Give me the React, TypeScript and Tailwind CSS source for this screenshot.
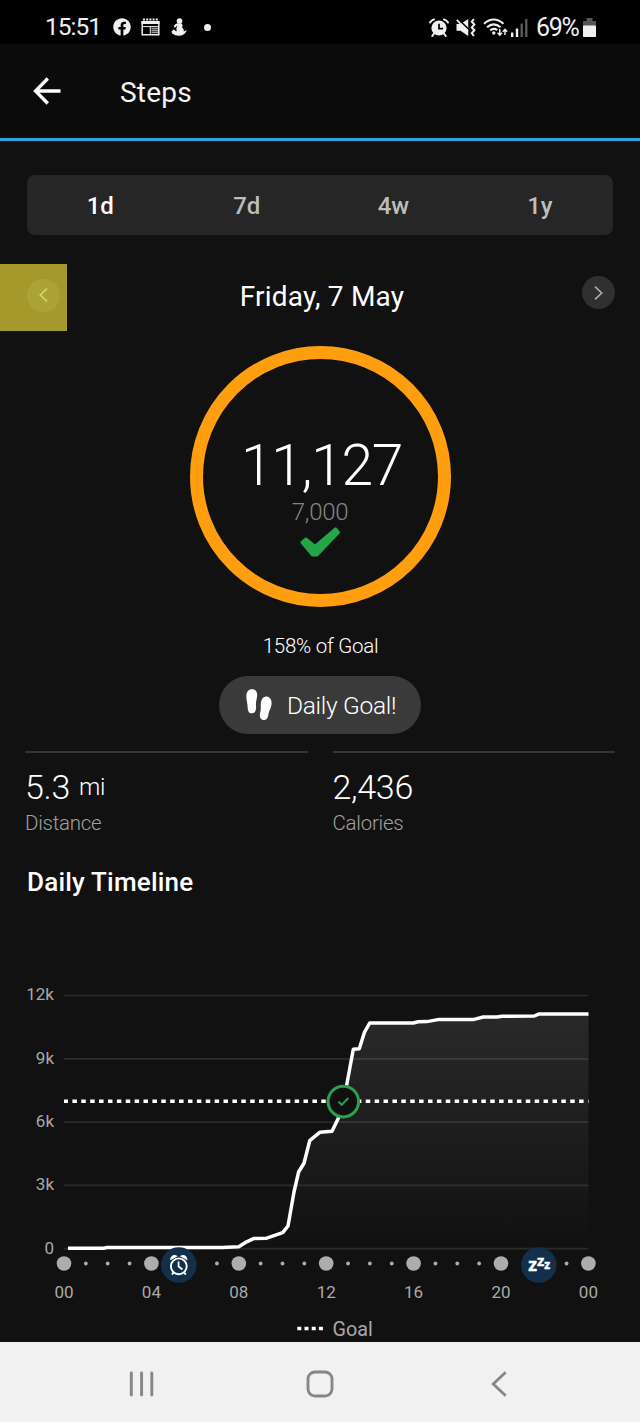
import React, { useState } from 'react';
import { FaFacebook } from 'react-icons/fa';

const RANGES = ['1d', '7d', '4w', '1y'];

// Cumulative steps over the day, in chart coordinates
const LINE =
  'M68 1248.2 L104 1248.2 L107 1247.4 L222 1247.4 L238.7 1246.8 L246.7 1241.8 L254 1238.4 L266.7 1238.2 L282.7 1232.7 L288 1226 L294 1192 L298.7 1171.7 L304 1163.3 L309.7 1140.7 L320 1132.2 L332 1131.3 L338.3 1118.3 L346.7 1085 L353.3 1049.3 L359.3 1048.7 L364.3 1032.7 L369.7 1023 L413.3 1023 L418 1021.8 L427 1021.6 L439.3 1019.4 L474 1019.4 L483.3 1017 L497 1017 L502 1016.2 L534.3 1016 L538.6 1014.1 L588.5 1014.1';

const GRID = [
  { label: '12k', y: 995.5 },
  { label: '9k', y: 1058.8 },
  { label: '6k', y: 1122.2 },
  { label: '3k', y: 1185.4 },
  { label: '0', y: 1248.6 },
];

const HOURS = ['00', '04', '08', '12', '16', '20', '00'];
const HOUR_WIDTH = 524.4 / 24;
// No dots under the wake up and bed time badges
const HIDDEN_DOTS = [5, 6, 21, 22];

const StatusBar = () => (
  <div className="flex h-[44px] items-center bg-black pt-[10px] text-[#f0f0f0]">
    <span className="ml-[45px] w-[58px] text-[24.5px] leading-none tracking-[-1px]">15:51</span>
    <FaFacebook className="ml-[10px] h-[18px] w-[18px]" />
    <svg className="ml-[10px] h-[18px] w-[19px]" viewBox="0 0 19 18" fill="none" stroke="currentColor">
      <path d="M1.2 3.5V16.8H17.8V3.5" strokeWidth="1.5" />
      <path d="M.5 4.5H18.5" strokeWidth="3" />
      <path d="M2 1.5H18" strokeWidth="2" strokeDasharray="2 1.2" />
      <path d="M2 8.6H17M9.3 8.6V16" strokeWidth="1" />
      <path d="M10.5 10.5H17M10.5 12.5H17M10.5 14.5H17" strokeWidth="1.3" opacity=".65" />
    </svg>
    <svg className="ml-[11px] h-[18px] w-[16px]" viewBox="0 0 16 18" fill="currentColor">
      <circle cx="8.5" cy="3" r="2.8" />
      <path d="M7 5.2C3.5 6 2.2 8 3.5 9.6L5 9C5.2 8.3 6 7.7 6.4 7.8C5.4 9.5 5 11.5 5.8 13.2C4 13 3.2 12.6 2.8 11.3L.3 13.8C2.5 17.5 6 18 8.6 17.8C12.4 17.5 15 15.4 15.7 12L12.8 13.5C12.9 12.3 12.8 10.7 11 9.5C12.1 8 11.6 6 10 5.2Z" />
      <path d="M1.2 15.2L4 12.6" stroke="currentColor" strokeWidth="1.3" />
    </svg>
    <span className="ml-[17px] h-[7px] w-[7px] rounded-full bg-current" />

    <svg className="ml-auto h-[19px] w-[20px]" viewBox="0 0 20 19">
      <circle cx="10" cy="10" r="7.6" fill="currentColor" />
      <path d="M1 4.5Q2.5 1.8 5 1.4M19 4.5Q17.5 1.8 15 1.4M5 15.5L3.3 18M15 15.5L16.7 18" stroke="currentColor" strokeWidth="2" strokeLinecap="round" fill="none" />
      <path d="M10 5.8V10.6H14" stroke="#000" strokeWidth="1.7" fill="none" />
    </svg>
    <svg className="ml-[7px] h-[19px] w-[20px]" viewBox="0 0 20 19" fill="none">
      <path d="M.5 6H4.5L12.2 1V18L4.5 12.8H.5Z" fill="currentColor" />
      <path d="M1.5 .5L13.5 12" stroke="#000" strokeWidth="1.6" />
      <path d="M.8 1.8L12 13.5" stroke="currentColor" strokeWidth="1.8" />
      <path d="M17.8 1L15.8 3.7L18.4 6.5L15.8 9.4L18.4 12.3L15.8 15.1L17.8 18" stroke="currentColor" strokeWidth="2" />
    </svg>
    <svg className="ml-[7px] h-[19px] w-[25px]" viewBox="0 0 25 19" fill="none" stroke="currentColor">
      <path d="M1 5.7Q10.5-2.7 20.5 5.7M4 9.2Q10.7 3.5 17.5 9.2M7.2 12.4Q10.8 9.6 14.4 12" strokeWidth="2" />
      <circle cx="10.8" cy="15" r="1.7" fill="currentColor" stroke="none" />
      <path d="M16.8 11V16.5M14.6 14.8L16.8 17.2L19 14.8M22 17V12M19.8 13.8L22 11.4L24.2 13.8" strokeWidth="1.5" />
    </svg>
    <svg className="ml-[3px] h-[19px] w-[17px]" viewBox="0 0 17 19" fill="currentColor">
      <rect x="0" y="14.5" width="2.4" height="4.5" />
      <rect x="4.8" y="10.5" width="2.4" height="8.5" />
      <rect x="9.6" y="5.5" width="2.2" height="13.5" opacity=".4" />
      <rect x="14.2" y="1" width="2.2" height="18" opacity=".4" />
    </svg>
    <span className="ml-[8px] w-[45px] text-[25px] leading-none tracking-[-1.3px]">69%</span>
    <svg className="mr-[44px] ml-[2px] h-[19px] w-[13px]" viewBox="0 0 13 19">
      <path d="M3.5 0H9.5V3H13V8H0V3H3.5Z" fill="#555" />
      <rect y="7.5" width="13" height="11.5" rx=".8" fill="currentColor" />
    </svg>
  </div>
);

const AppBar = () => (
  <header className="flex h-[97px] items-center border-b-[3px] border-[#2ba3da] bg-[#0b0b0b] pl-[33px]">
    <svg className="h-[28px] w-[28px]" viewBox="0 0 28 28" fill="none" stroke="#fff" strokeWidth="3.3">
      <path d="M27.5 14H2.5M14.8 1.5L2.5 14L14.8 26.5" />
    </svg>
    <h1 className="ml-[59px] pt-[4px] text-[28px] leading-none tracking-[0.2px] text-[#f4f4f4]">Steps</h1>
  </header>
);

const RangeTabs = () => {
  const [range, setRange] = useState('1d');
  return (
    <div className="mx-[27px] mt-[34px] flex h-[60px] rounded-lg bg-[#262626]">
      {RANGES.map(r => (
        <button
          key={r}
          onClick={() => setRange(r)}
          className={`flex-1 pt-[2px] text-[24px] leading-none font-medium tracking-[-0.2px] ${r === range ? 'text-white' : 'text-[#bdbdbd]'}`}
        >
          {r}
        </button>
      ))}
    </div>
  );
};

const DateNav = () => (
  <div className="mt-[29px] flex h-[67px] items-center justify-between">
    <button className="flex h-[67px] w-[67px] items-center justify-end bg-[#a5992c] pr-[7px] pb-[5px]">
      <span className="flex h-[33px] w-[33px] items-center justify-center rounded-full bg-[#aca337]">
        <svg className="h-[14px] w-[9px]" viewBox="0 0 9 14" fill="none" stroke="#d8d16a" strokeWidth="1.7">
          <path d="M8 .6L1.3 7L8 13.4" />
        </svg>
      </span>
    </button>
    <h2 className="pb-[2px] pl-[4px] text-[28px] leading-none tracking-[0.2px] text-white">Friday, 7 May</h2>
    <div className="flex h-full w-[67px] pt-[12px] pl-[9px]">
      <button className="flex h-[33px] w-[33px] items-center justify-center rounded-full bg-[#303030]">
        <svg className="h-[14px] w-[9px]" viewBox="0 0 9 14" fill="none" stroke="#aaa" strokeWidth="1.7">
          <path d="M1 .6L7.7 7L1 13.4" />
        </svg>
      </button>
    </div>
  </div>
);

const GoalRing = () => (
  <div className="mx-auto mt-[15px] flex h-[261px] w-[261px] flex-col items-center rounded-full border-[13px] border-[#ff9f10] pt-[78px]">
    <div className="pl-[3px] text-[57px] leading-[57px] font-light tracking-[-1.3px] text-white">11,127</div>
    <div className="mt-[6px] text-[24px] leading-[24px] font-light tracking-[-0.3px] text-[#858585]">7,000</div>
    <svg className="mt-[3px] h-[30px] w-[40px]" viewBox="0 0 40 30">
      <path d="M2 15.5L6 12L15 19.5L35.5 1.8L38.4 5.5L17 28L12.5 28Z" fill="#24a547" stroke="#24a547" strokeWidth="3" strokeLinejoin="round" />
    </svg>
  </div>
);

const FootprintsIcon = () => (
  <svg className="h-[32px] w-[26px]" viewBox="0 0 26 32" fill="#fff">
    <path d="M5.2 .3C8.8 -.2 11.4 2.3 11.2 6.2C11.1 9.5 9.7 12 10 15.5C10.2 18.6 10.5 23.5 6.5 24.3C3 24.8 1.8 22 1.7 19C1.7 15.500 .6 12.5 .4 8.5C.1 4.2 1.6 .8 5.2 .3Z" />
    <path d="M20.700 7.5C24.5 8.1 26 11.5 25.5 15.5C25 19.5 23 21.5 22.5 25C22.1 28.6 20.8 31.5 17.5 31C13.8 30.5 13.2 26.5 14.3 23C15.4 19.5 14.2 17 15 13C15.8 9.2 17.7 7.1 20.7 7.5Z" />
  </svg>
);

const Stat = ({ value, unit, label }: { value: string; unit?: string; label: string }) => (
  <div className="flex-1 border-t-2 border-[#363636] pt-[17px]">
    <div className="flex h-[34px] text-[34px] leading-[34px] font-light tracking-[-0.3px] text-white">
      {value}
      {unit && <span className="ml-[9px] text-[24px] leading-[35px]">{unit}</span>}
    </div>
    <div className="mt-[8px] text-[20.5px] leading-[22px] font-light tracking-[-0.25px] text-[#a0a0a0]">{label}</div>
  </div>
);

const TimelineChart = () => (
  <svg className="block h-[362px] w-[640px]" viewBox="0 980 640 362">
    <defs>
      <linearGradient id="area" x1="0" y1="0" x2="0" y2="1">
        <stop offset="0" stopColor="#292929" />
        <stop offset="1" stopColor="#111111" />
      </linearGradient>
    </defs>
    <path d={`${LINE} V1248.5 H68 Z`} fill="url(#area)" />
    {GRID.map(g => (
      <g key={g.label}>
        <line x1="64" x2="588.5" y1={g.y} y2={g.y} stroke="#fff" strokeOpacity=".11" strokeWidth="1.7" />
        <text x="54" y={g.y + 4.9} textAnchor="end" fontSize="17" fill="#a9a9a9">{g.label}</text>
      </g>
    ))}
    <path d={LINE} fill="none" stroke="#fff" strokeWidth="3.5" strokeLinejoin="round" />
    <line x1="64" x2="588.5" y1="1101.3" y2="1101.3" stroke="#fff" strokeWidth="3.6" strokeDasharray="4.5 4.39" strokeDashoffset=".5" />

    {/* goal reached */}
    <circle cx="343.3" cy="1101.6" r="15.3" fill="#101010" stroke="#2b9f50" strokeWidth="3" />
    <path d="M338.5 1101.7L341.8 1104.8L348.3 1098" fill="none" stroke="#2b9f50" strokeWidth="2" />

    {Array.from({ length: 25 }, (_, i) => i).filter(i => !HIDDEN_DOTS.includes(i)).map(i => (
      <circle key={i} cx={64 + i * HOUR_WIDTH} cy="1263.5" r={i % 4 === 0 ? 7.3 : 1.9} fill="#adadad" />
    ))}
    {HOURS.map((h, i) => (
      <text key={i} x={64 + i * 4 * HOUR_WIDTH} y="1297.6" textAnchor="middle" fontSize="17" fill="#a9a9a9">{h}</text>
    ))}

    {/* wake up */}
    <circle cx="178.8" cy="1265" r="17.8" fill="#12304b" />
    <g fill="none" stroke="#fff" strokeWidth="1.9">
      <circle cx="178.8" cy="1266.3" r="7.9" />
      <path d="M178.6 1261.5V1266.5L182.5 1269.5" strokeWidth="1.7" />
      <path d="M173.5 1272.7L171.8 1274.5M184.1 1272.7L185.8 1274.5" />
    </g>
    <path d="M170.3 1260.3C169.5 1256.6 174 1253 177.7 1256.3ZM187.3 1260.3C188.1 1256.6 183.6 1253 179.9 1256.3Z" fill="#fff" />

    {/* bed time */}
    <circle cx="538.8" cy="1265" r="17.8" fill="#12304b" />
    <g fill="#fff" stroke="#fff" strokeWidth=".4" fontWeight="700" fontFamily="'Open Sans', sans-serif">
      <text x="528.2" y="1270.6" fontSize="18">z</text>
      <text x="537" y="1265.8" fontSize="15">z</text>
      <text x="544.2" y="1268.6" fontSize="12">z</text>
    </g>

    <line x1="297.3" x2="323" y1="1328.5" y2="1328.5" stroke="#fff" strokeWidth="3.6" strokeDasharray="4 3.2" />
    <text x="332.5" y="1336" fontSize="19.8" fill="#a9a9a9">Goal</text>
  </svg>
);

const NavBar = () => (
  <nav className="flex h-[80px] items-center bg-[#f1f1f1] pt-[3px]">
    <svg className="ml-[129px] h-[26px] w-[26px]" viewBox="0 0 26 26" stroke="#868686" strokeWidth="2.9" strokeLinecap="round">
      <path d="M2.3 2V24M12.6 2V24M22.8 2V24" />
    </svg>
    <svg className="ml-[151px] h-[28px] w-[28px]" viewBox="0 0 28 28" fill="none" stroke="#868686" strokeWidth="2.8">
      <rect x="2" y="2" width="24" height="24" rx="7" />
    </svg>
    <svg className="ml-[157px] h-[26px] w-[16px]" viewBox="0 0 16 26" fill="none" stroke="#868686" strokeWidth="2.8">
      <path d="M14.7 1.3L2.2 13L14.7 24.7" />
    </svg>
  </nav>
);

const App = () => (
  <div className="flex h-[1422px] w-[640px] flex-col overflow-hidden bg-[#111111] font-['Roboto',sans-serif]">
    <StatusBar />
    <AppBar />
    <main className="flex h-[1201px] flex-col">
      <RangeTabs />
      <DateNav />
      <GoalRing />
      <p className="mt-[29px] pl-[1px] text-center text-[20.5px] leading-[20px] font-light tracking-[-0.25px] text-white">158% of Goal</p>
      <div className="mx-auto mt-[20px] flex h-[58px] w-[202px] items-center rounded-full bg-[#3a3a3a] pl-[27px]">
        <FootprintsIcon />
        <span className="ml-[15px] pt-[2px] text-[24.5px] leading-none font-light tracking-[-0.3px] text-white">Daily Goal!</span>
      </div>
      <div className="mx-[25px] mt-[17px] flex gap-[25px]">
        <Stat value="5.3" unit="mi" label="Distance" />
        <Stat value="2,436" label="Calories" />
      </div>
      <h3 className="mt-[33px] ml-[27px] text-[26px] leading-[30px] font-medium tracking-[0.2px] text-white">Daily Timeline</h3>
      <div className="mt-auto">
        <TimelineChart />
      </div>
    </main>
    <NavBar />
  </div>
);

export default App;
